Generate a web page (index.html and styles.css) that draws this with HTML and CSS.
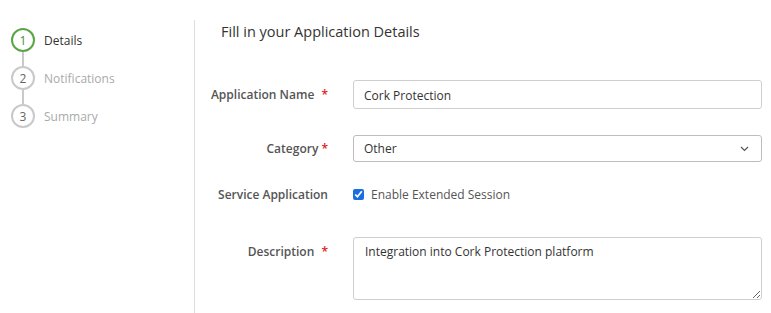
FILE: index.html
```html
<!DOCTYPE html>
<html>
<head>
<meta charset="utf-8">
<link rel="stylesheet" href="styles.css">
</head>
<body>
<div class="page">
  <aside class="sidebar">
    <ol class="steps">
      <li class="step active"><span class="circle">1</span><span class="step-label">Details</span></li>
      <li class="connector"></li>
      <li class="step"><span class="circle">2</span><span class="step-label">Notifications</span></li>
      <li class="connector"></li>
      <li class="step"><span class="circle">3</span><span class="step-label">Summary</span></li>
    </ol>
  </aside>
  <main class="main">
    <h1 class="title">Fill in your Application Details</h1>
    <form class="form">
      <div class="row row-name">
        <label class="label">Application Name <span class="req">*</span></label>
        <input class="control input" type="text" value="Cork Protection">
      </div>
      <div class="row row-cat">
        <label class="label">Category <span class="req tight">*</span></label>
        <div class="control select">
          <span>Other</span>
          <svg class="chev" width="9" height="6" viewBox="0 0 9 6"><path d="M1 1l3.5 3.5L8 1" fill="none" stroke="#555" stroke-width="1.2"/></svg>
        </div>
      </div>
      <div class="row row-svc">
        <label class="label">Service Application</label>
        <label class="check"><input type="checkbox" checked> <span>Enable Extended Session</span></label>
      </div>
      <div class="row row-desc">
        <label class="label">Description <span class="req">*</span></label>
        <textarea class="control textarea">Integration into Cork Protection platform</textarea>
      </div>
    </form>
  </main>
</div>
</body>
</html>
```
FILE: styles.css
```css
* { box-sizing: border-box; }
html, body { margin: 0; padding: 0; background: #fff; }
body { font-family: "Open Sans", "Noto Sans", sans-serif; font-size: 12px; color: #333; }
.page { display: flex; height: 313px; }
.sidebar { width: 195px; flex: none; padding-top: 20px; }
.steps { list-style: none; margin: 0; padding: 8px 0 0 11px; height: 293px; width: 195px; border-right: 1px solid #ddd; }
.step { display: flex; align-items: center; height: 24px; }
.circle { width: 24px; height: 24px; border-radius: 50%; border: 2px solid #c9c9c9; display: flex; align-items: center; justify-content: center; font-size: 12px; color: #666; flex: none; }
.step-label { margin-left: 9px; color: #aaa; font-size: 12px; }
.step.active .circle { border-color: #5aa646; color: #4b8a3a; }
.step.active .step-label { color: #333; }
.connector { width: 2px; height: 14px; background: #c9c9c9; margin-left: 11px; }
.main { flex: 1; padding-top: 21px; }
.title { margin: 0 0 0 26px; font-size: 14.5px; font-weight: 400; color: #333; line-height: 22px; }
.form { margin-top: 37px; }
.row { display: flex; }
.label { width: 133px; flex: none; text-align: right; color: #555; font-weight: 600; font-size: 12px; margin-right: 25px; }
.req { color: #e02020; margin-left: 4px; font-weight: 600; }
.req.tight { margin-left: 0; }
.control { width: 409px; border: 1px solid #cfcfcf; border-radius: 3px; font-family: inherit; font-size: 12px; color: #333; background: #fff; }
.row-name { align-items: center; height: 29px; }
.input { height: 29px; padding: 1px 10px 0; outline: none; }
.row-cat { align-items: center; margin-top: 26px; height: 27px; }
.select { height: 27px; display: flex; align-items: center; justify-content: space-between; padding: 0 12px 0 10px; border-color: #bdbdbd; }
.chev { margin-top: 1px; }
.row-svc { align-items: center; margin-top: 22px; height: 20px; }
.check { display: flex; align-items: center; color: #555; font-size: 12px; }
.check input { margin: 0 7px 0 0; width: 11px; height: 11px; accent-color: #1a6fe0; }
.row-desc { margin-top: 33px; }
.row-desc .label { padding-top: 6px; }
.textarea { height: 63px; padding: 5px 11px; resize: vertical; outline: none; line-height: 18px; }
```
